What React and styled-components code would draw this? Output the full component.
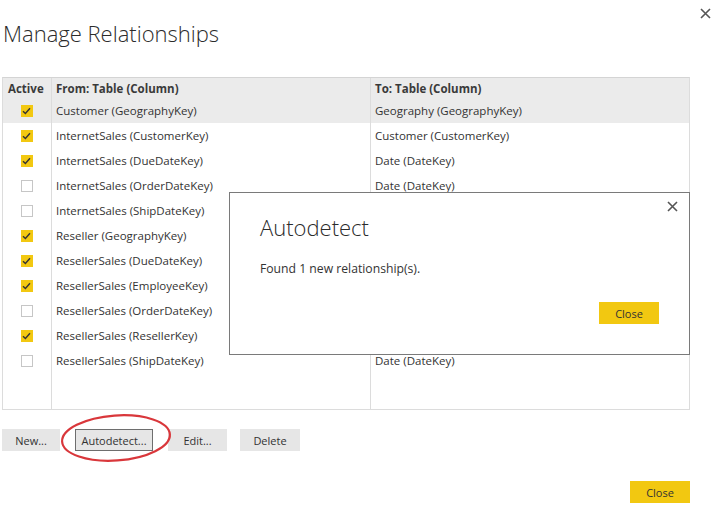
import styled, { createGlobalStyle } from 'styled-components'

const GlobalStyle = createGlobalStyle`
  html, body {
    margin: 0;
    padding: 0;
    background: #fff;
  }
  body {
    font-family: "Open Sans", "Liberation Sans", sans-serif;
    color: #333;
  }
`

const Page = styled.div`
  position: relative;
  width: 720px;
  height: 509px;
  padding: 0 30px 0 2px;
  box-sizing: border-box;
  display: flex;
  flex-direction: column;
`

const Title = styled.div`
  font-size: 22px;
  font-weight: 300;
  line-height: 32px;
  margin: 17px 0 0 1px;
  color: #2b2b2b;
`

const CloseX = styled.button`
  position: absolute;
  top: ${(p) => p.$top}px;
  right: ${(p) => p.$right}px;
  width: 14px;
  height: 14px;
  padding: 0;
  border: none;
  background: none;
  display: flex;
  align-items: center;
  justify-content: center;
`

const Table = styled.div`
  margin-top: 28px;
  height: 331px;
  border: 1px solid #dcdcdc;
  border-top-color: #d4d4d4;
  display: flex;
  flex-direction: column;
  font-size: 11.5px;
`

const Row = styled.div`
  display: grid;
  grid-template-columns: 49px 319px 1fr;
  height: ${(p) => (p.$header ? 20 : 25)}px;
  background: ${(p) => (p.$header || p.$selected ? '#ebebeb' : '#fff')};
  font-weight: ${(p) => (p.$header ? 700 : 400)};
  color: ${(p) => (p.$header ? '#3a3a3a' : '#333')};
`

const Filler = styled(Row)`
  flex: 1;
  height: auto;
`

const Cell = styled.div`
  display: flex;
  align-items: center;
  justify-content: ${(p) => (p.$center ? 'center' : 'flex-start')};
  padding-left: ${(p) => (p.$center ? 0 : 4)}px;
  border-right: ${(p) => (p.$last ? 'none' : '1px solid #dcdcdc')};
  white-space: nowrap;
`

const HeaderCell = styled(Cell)`
  padding-left: ${(p) => (p.$first ? 5 : 4)}px;
`

const Box = styled.span`
  width: 12px;
  height: 12px;
  box-sizing: border-box;
  margin-right: 1px;
  background: ${(p) => (p.$checked ? '#f2c811' : '#fff')};
  border: ${(p) => (p.$checked ? 'none' : '1px solid #c6c6c6')};
  display: flex;
  align-items: center;
  justify-content: center;
`

const ButtonRow = styled.div`
  display: flex;
  margin-top: 19px;
`

const Button = styled.button`
  height: 22px;
  width: ${(p) => p.$w}px;
  margin-left: ${(p) => p.$ml || 0}px;
  background: #e6e6e6;
  border: 1px solid ${(p) => (p.$focus ? '#6e6e6e' : '#e6e6e6')};
  font-family: inherit;
  font-size: 11px;
  color: #333;
  padding: 0;
`

const Footer = styled.div`
  display: flex;
  justify-content: flex-end;
  margin-top: 30px;
`

const YellowButton = styled.button`
  height: 22px;
  width: 60px;
  background: #f2c811;
  border: none;
  font-family: inherit;
  font-size: 11px;
  color: #333;
  padding: 0;
`

const Ellipse = styled.svg`
  position: absolute;
  left: 58px;
  top: 411px;
`

const Dialog = styled.div`
  position: absolute;
  left: 229px;
  top: 192px;
  width: 461px;
  height: 163px;
  box-sizing: border-box;
  background: #fff;
  border: 1px solid #7a7a7a;
  padding: 18px 30px 0 30px;
  display: flex;
  flex-direction: column;
`

const DialogTitle = styled.div`
  font-size: 22px;
  font-weight: 300;
  line-height: 32px;
  color: #2b2b2b;
`

const DialogText = styled.div`
  font-size: 12.2px;
  line-height: 17px;
  margin-top: 17px;
  color: #333;
`

const DialogFooter = styled.div`
  display: flex;
  justify-content: flex-end;
  margin-top: 25px;
`

const Check = () => (
  <svg width="9" height="8" viewBox="0 0 9 8">
    <path d="M1 4.2 L3.4 6.5 L8 1.2" fill="none" stroke="#333" strokeWidth="1.4" />
  </svg>
)

const XIcon = ({ size = 11 }) => (
  <svg width={size} height={size} viewBox="0 0 11 11">
    <path d="M1 1 L10 10 M10 1 L1 10" stroke="#555" strokeWidth="1.6" />
  </svg>
)

const rows = [
  [true, 'Customer (GeographyKey)', 'Geography (GeographyKey)'],
  [true, 'InternetSales (CustomerKey)', 'Customer (CustomerKey)'],
  [true, 'InternetSales (DueDateKey)', 'Date (DateKey)'],
  [false, 'InternetSales (OrderDateKey)', 'Date (DateKey)'],
  [false, 'InternetSales (ShipDateKey)', 'Date (DateKey)'],
  [true, 'Reseller (GeographyKey)', 'Geography (GeographyKey)'],
  [true, 'ResellerSales (DueDateKey)', 'Date (DateKey)'],
  [true, 'ResellerSales (EmployeeKey)', 'Employee (EmployeeKey)'],
  [false, 'ResellerSales (OrderDateKey)', 'Date (DateKey)'],
  [true, 'ResellerSales (ResellerKey)', 'Reseller (ResellerKey)'],
  [false, 'ResellerSales (ShipDateKey)', 'Date (DateKey)'],
]

const App = () => {
  return (
    <Page>
      <GlobalStyle />
      <Title>Manage Relationships</Title>
      <CloseX $top={6} $right={8}>
        <XIcon />
      </CloseX>

      <Table>
        <Row $header>
          <HeaderCell $first>Active</HeaderCell>
          <HeaderCell>From: Table (Column)</HeaderCell>
          <HeaderCell $last>To: Table (Column)</HeaderCell>
        </Row>
        {rows.map(([checked, from, to], i) => (
          <Row key={from} $selected={i === 0}>
            <Cell $center>
              <Box $checked={checked}>{checked && <Check />}</Box>
            </Cell>
            <Cell>{from}</Cell>
            <Cell $last>{to}</Cell>
          </Row>
        ))}
        <Filler>
          <Cell />
          <Cell />
          <Cell $last />
        </Filler>
      </Table>

      <ButtonRow>
        <Button $w={58}>New...</Button>
        <Button $w={78} $ml={15} $focus>Autodetect...</Button>
        <Button $w={59} $ml={15}>Edit...</Button>
        <Button $w={60} $ml={13}>Delete</Button>
      </ButtonRow>

      <Footer>
        <YellowButton>Close</YellowButton>
      </Footer>

      <Ellipse width="118" height="54" viewBox="0 0 118 54">
        <ellipse
          cx="58"
          cy="27"
          rx="54"
          ry="22.5"
          transform="rotate(-4 58 27)"
          fill="none"
          stroke="#d9373b"
          strokeWidth="2.2"
        />
      </Ellipse>

      <Dialog>
        <CloseX $top={6} $right={10}>
          <XIcon />
        </CloseX>
        <DialogTitle>Autodetect</DialogTitle>
        <DialogText>Found 1 new relationship(s).</DialogText>
        <DialogFooter>
          <YellowButton>Close</YellowButton>
        </DialogFooter>
      </Dialog>
    </Page>
  )
}

export default App
